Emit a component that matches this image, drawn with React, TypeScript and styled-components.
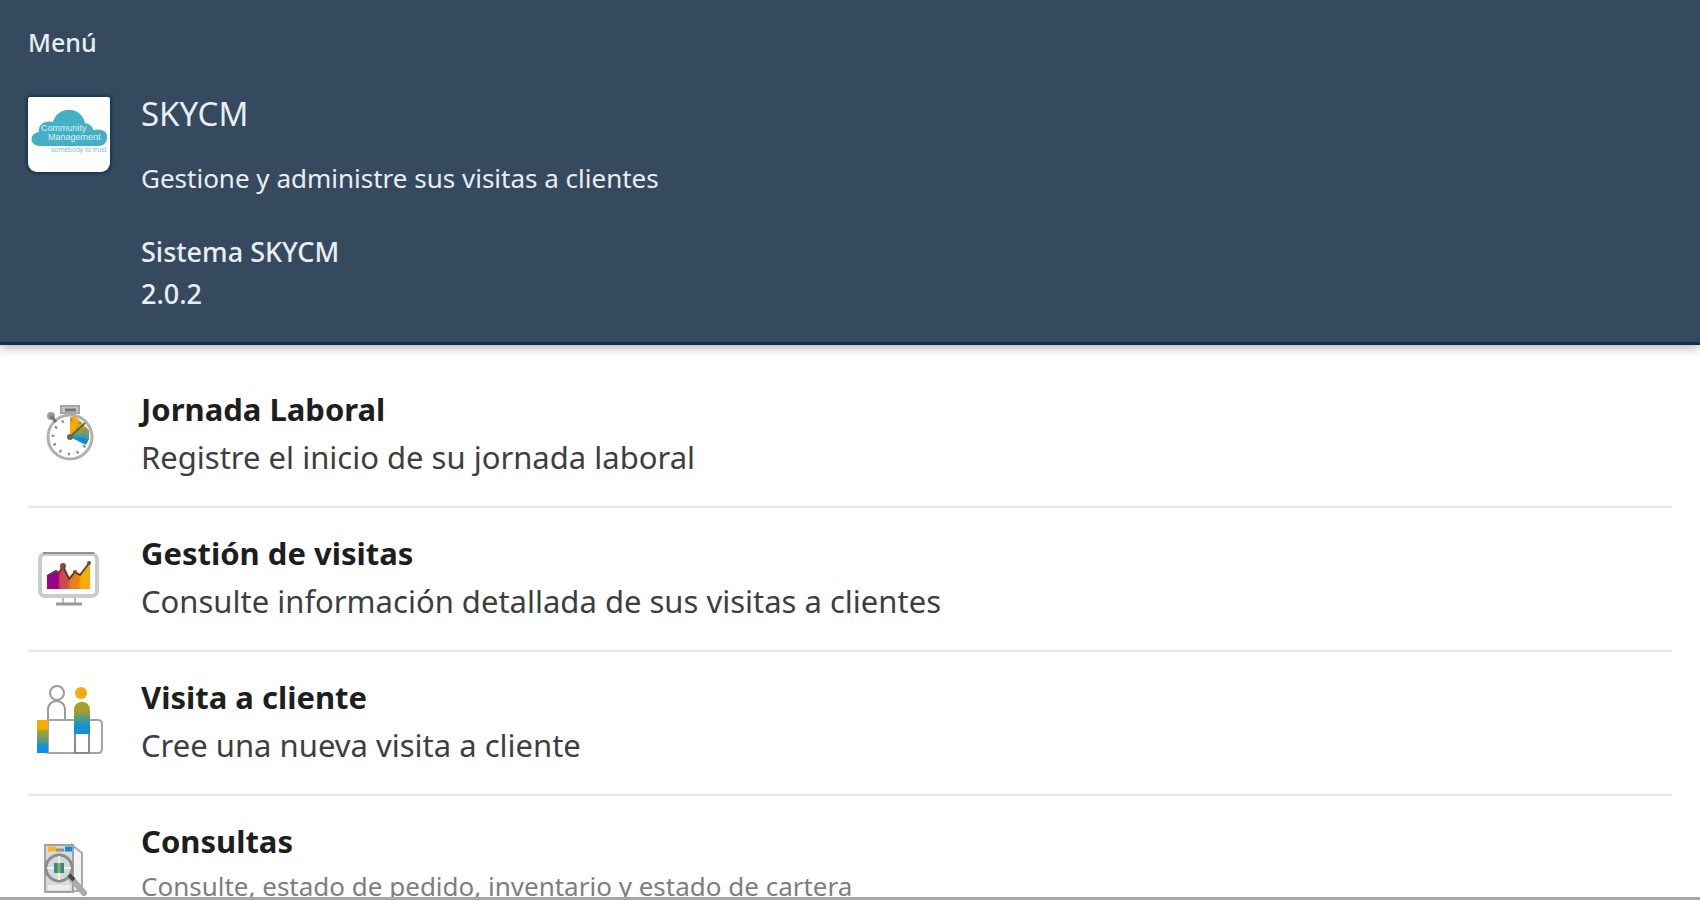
import React from 'react';
import styled, { createGlobalStyle } from 'styled-components';

const GlobalStyle = createGlobalStyle`
  * { box-sizing: border-box; }
  body {
    margin: 0;
    background: #fff;
    font-family: 'Noto Sans', 'Open Sans', sans-serif;
  }
  h1, h2, p, ul { margin: 0; padding: 0; }
`;

const Page = styled.div`
  display: flex;
  flex-direction: column;
  height: 100vh;
  overflow: hidden;
  border-bottom: 3px solid #a6a6a8;
`;

const Header = styled.header`
  flex: none;
  position: relative;
  padding: 24px 28px 27px;
  color: #e9eef3;
  background: #354a5f;
  border-bottom: 3px solid #0b3351;
  box-shadow: 0 2px 10px rgba(70, 60, 50, 0.45);
`;

const MenuLabel = styled.p`
  font-size: 25px;
  font-weight: 500;
  line-height: 36px;
  margin-bottom: 32px;
`;

const Brand = styled.div`
  display: grid;
  grid-template-columns: 82px 1fr;
  column-gap: 31px;
  align-items: start;
`;

const Logo = styled.svg`
  width: 82px;
  height: 75px;
  margin-top: 5px;
  border-radius: 2px 2px 9px 9px;
  background: #fff;
  box-shadow: 0 0 3px 2px #123a59;
`;

const AppName = styled.h1`
  font-size: 33px;
  font-weight: 400;
  line-height: 44px;
  margin-bottom: 24px;
`;

const Summary = styled.p`
  font-size: 26px;
  font-weight: 400;
  line-height: 36px;
  margin-bottom: 35px;
`;

const SystemInfo = styled.p`
  font-size: 27px;
  font-weight: 500;
  line-height: 42px;
`;

const Menu = styled.nav`
  flex: 1;
  min-height: 0;
  overflow: hidden;
  padding: 19px 28px 0;
`;

const MenuList = styled.ul`
  list-style: none;
`;

const MenuItem = styled.li`
  border-bottom: 2px solid #e9e9e9;
`;

const MenuLink = styled.a`
  display: grid;
  grid-template-columns: 82px 1fr;
  column-gap: 31px;
  align-items: center;
  padding: 21px 0 25px;
  color: #111;
  text-decoration: none;
`;

const ItemIcon = styled.svg`
  width: 82px;
  height: 96px;
  overflow: visible;
`;

const ItemTitle = styled.h2`
  font-size: 31px;
  font-weight: 700;
  line-height: 48px;
  color: #1c1e20;
`;

const ItemText = styled.p<{ $muted?: boolean }>`
  font-size: ${(p) => (p.$muted ? 26 : 31)}px;
  line-height: ${(p) => (p.$muted ? 42 : 48)}px;
  padding-bottom: ${(p) => (p.$muted ? 6 : 0)}px;
  color: ${(p) => (p.$muted ? '#7c7e80' : '#3c3e40')};
`;

const SkyLogo = () => (
  <Logo viewBox="0 0 82 75" role="img" aria-label="Community Management">
    <path
      d="M12 49C1 49 1 36 11 35C10 27 17 23 25 25C29 9 53 8 57 26C62 27 65 30 65 33C75 31 80 35 79 41C79 46 75 49 70 49Z"
      fill="#45b0c5"
    />
    <g fontFamily="Liberation Sans, sans-serif" fontSize="9">
      <text x="13" y="34" fill="#d9f0f4">Community</text>
      <text x="20" y="43" fill="#d9f0f4">Management</text>
      <text x="23" y="55" fill="#7cc3cf" fontSize="7">somebody to trust</text>
    </g>
  </Logo>
);

const StopwatchIcon = () => (
  <ItemIcon viewBox="0 0 82 96" aria-hidden="true" fill="none">
    <defs>
      <linearGradient id="dial" x1="0" y1="0" x2="0" y2="1">
        <stop offset="0.3" stopColor="#f5ab00" />
        <stop offset="0.4" stopColor="#a5a02c" />
        <stop offset="0.65" stopColor="#5a9d83" />
        <stop offset="0.78" stopColor="#0a8ee0" />
      </linearGradient>
    </defs>
    <circle cx="42" cy="52" r="22" stroke="#b0b0b0" strokeWidth="3" />
    <path d="M42 52V32H48L61 45V54L58 60Z" fill="url(#dial)" />
    <path d="M42 32H48V44L42 52Z" fill="#f5ab00" />
    <path d="M42 52L57 38" stroke="#5c6940" strokeWidth="2" />
    <circle cx="42" cy="52" r="17" stroke="#888" strokeWidth="3" strokeDasharray="2 6.9" />
    <path d="M33 21H51V28H33Z" fill="#c6c6c6" stroke="#a6a6a6" strokeWidth="2" />
    <path d="M37 25H48" stroke="#777" strokeWidth="3" />
    <circle cx="23" cy="31" r="4" fill="#9a9a9a" />
    <path d="M23 31L28 37" stroke="#777" strokeWidth="3" />
    <circle cx="42" cy="52" r="3" fill="#666" />
  </ItemIcon>
);

const ChartScreenIcon = () => (
  <ItemIcon viewBox="0 0 82 96" aria-hidden="true" fill="none">
    <defs>
      <linearGradient id="area" x1="0" y1="0" x2="1" y2="0">
        <stop offset="0.26" stopColor="#99008c" />
        <stop offset="0.3" stopColor="#c9444d" />
        <stop offset="0.48" stopColor="#cf504a" />
        <stop offset="0.54" stopColor="#e37b1c" />
        <stop offset="0.74" stopColor="#e8851a" />
        <stop offset="0.8" stopColor="#f9ad00" />
      </linearGradient>
    </defs>
    <rect x="12" y="25" width="57" height="42" rx="5" stroke="#cbcbcb" strokeWidth="4" />
    <path d="M15 24H66" stroke="#929292" strokeWidth="2" />
    <path d="M19 60V47L28 42L31 44L35 37L41 50L47 43L53 46L62 34V60Z" fill="url(#area)" />
    <path d="M19 47L28 42L31 44L35 37L41 50L47 43L52 46L62 33" stroke="#5f3b37" strokeWidth="2" />
    <circle cx="35" cy="37" r="3" fill="#983e42" />
    <circle cx="47" cy="43" r="2" fill="#765225" />
    <circle cx="61" cy="34" r="2" fill="#765225" />
    <path d="M35 69V74M47 69V74" stroke="#bbb" strokeWidth="2" />
    <path d="M28 75H54" stroke="#999" strokeWidth="3" />
  </ItemIcon>
);

const MeetingIcon = () => (
  <ItemIcon viewBox="0 0 82 96" aria-hidden="true" fill="none">
    <defs>
      <linearGradient id="blend" x1="0" y1="0" x2="0" y2="1">
        <stop offset="0.25" stopColor="#f5ab00" />
        <stop offset="0.35" stopColor="#a5a02c" />
        <stop offset="0.65" stopColor="#4f9d83" />
        <stop offset="0.8" stopColor="#0a8ee8" />
      </linearGradient>
      <linearGradient id="body" x1="0" y1="0" x2="0" y2="1">
        <stop offset="0.3" stopColor="#a9a02a" />
        <stop offset="0.45" stopColor="#659e65" />
        <stop offset="0.75" stopColor="#1391d8" />
      </linearGradient>
    </defs>
    <circle cx="29" cy="20" r="7" stroke="#9a9a9a" strokeWidth="2" />
    <path d="M20 46V37C20 25 37 25 37 37V46" stroke="#9a9a9a" strokeWidth="2" />
    <path d="M20 47H70Q74 47 74 51V76Q74 80 70 80H20Z" stroke="#a4a4a4" strokeWidth="2" />
    <rect x="9" y="47" width="11" height="33" fill="url(#blend)" />
    <rect x="47" y="47" width="14" height="33" fill="#fff" stroke="#8a8a8a" strokeWidth="2" />
    <path d="M46 61V37C46 26 62 26 62 37V61Z" fill="url(#body)" />
    <circle cx="53" cy="20" r="6" fill="#f9a80f" />
  </ItemIcon>
);

const SearchDocIcon = () => (
  <ItemIcon viewBox="0 0 82 96" aria-hidden="true" fill="none">
    <path d="M44 28L54 36V74H44Z" fill="#f2f2f2" stroke="#aaa" strokeWidth="2" />
    <path d="M17 28H45V75H17Z" fill="#d9d9d9" stroke="#a2a2a2" strokeWidth="2" />
    <path d="M20 68H42V73H20Z" fill="#eee" />
    <path d="M20 32H28" stroke="#f5b51d" strokeWidth="5" />
    <path d="M37 32H44" stroke="#1687d4" strokeWidth="5" />
    <path d="M28 33H36" stroke="#8b9b7c" strokeWidth="3" />
    <circle cx="31" cy="51" r="13" fill="#d4dad9" stroke="#8c8c8c" strokeWidth="3" />
    <path d="M31 39V63M19 51H43" stroke="#f2f2f2" strokeWidth="2" />
    <rect x="26" y="46" width="10" height="10" fill="#268da0" />
    <path d="M31 46V56" stroke="#a3ad3a" strokeWidth="3" />
    <path d="M43 61L56 76" stroke="#aaa" strokeWidth="6" strokeLinecap="round" />
    <path d="M41 58L46 63" stroke="#444" strokeWidth="4" />
  </ItemIcon>
);

const items = [
  { title: 'Jornada Laboral', text: 'Registre el inicio de su jornada laboral', Icon: StopwatchIcon },
  { title: 'Gestión de visitas', text: 'Consulte información detallada de sus visitas a clientes', Icon: ChartScreenIcon },
  { title: 'Visita a cliente', text: 'Cree una nueva visita a cliente', Icon: MeetingIcon },
  { title: 'Consultas', text: 'Consulte, estado de pedido, inventario y estado de cartera', Icon: SearchDocIcon, muted: true },
];

export default function App() {
  return (
    <Page>
      <GlobalStyle />
      <Header>
        <MenuLabel>Menú</MenuLabel>
        <Brand>
          <SkyLogo />
          <div>
            <AppName>SKYCM</AppName>
            <Summary>Gestione y administre sus visitas a clientes</Summary>
            <SystemInfo>Sistema SKYCM</SystemInfo>
            <SystemInfo>2.0.2</SystemInfo>
          </div>
        </Brand>
      </Header>
      <Menu aria-label="Menú">
        <MenuList>
          {items.map(({ title, text, Icon, muted }) => (
            <MenuItem key={title}>
              <MenuLink href="#">
                <Icon />
                <div>
                  <ItemTitle>{title}</ItemTitle>
                  <ItemText $muted={muted}>{text}</ItemText>
                </div>
              </MenuLink>
            </MenuItem>
          ))}
        </MenuList>
      </Menu>
    </Page>
  );
}
